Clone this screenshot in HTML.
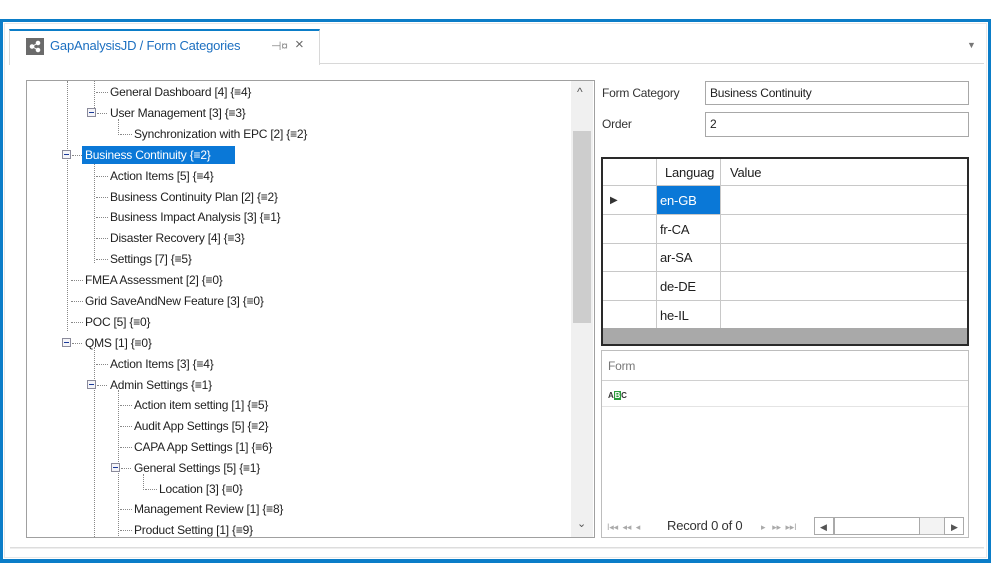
<!DOCTYPE html>
<html><head><meta charset="utf-8"><style>
*{box-sizing:border-box;margin:0;padding:0}
body{width:991px;height:563px;background:#fff;position:relative;overflow:hidden;font-family:"Liberation Sans",sans-serif;font-size:12px;color:#1e1e1e}
.a{position:absolute}
.t{position:absolute;white-space:nowrap;letter-spacing:-0.2px;line-height:14px}
.dv{position:absolute;border-left:1px dotted #888;width:0}
.dh{position:absolute;border-top:1px dotted #888;height:0}
.mn{position:absolute;width:9px;height:9px;border:1px solid #8a8a9a;background:#f4f4f8}
.mn:after{content:"";position:absolute;left:1px;top:3px;width:5px;height:1px;background:#1a3a9a}
</style></head><body>
<!-- blue frame -->
<div class="a" style="left:0;top:19px;width:991px;height:544px;border:3px solid #0b7dc8;border-bottom-width:4px"></div>
<div class="a" style="left:4px;top:23px;width:983px;height:535px;border:1px solid #e8e8e8"></div>
<!-- tab -->
<div class="a" style="left:9px;top:29px;width:311px;height:36px;border:1px solid #d8d8d8;border-top:2px solid #0b7dc8;border-bottom:none;background:#fff"></div>
<div class="a" style="left:320px;top:63px;width:664px;height:1px;background:#d8d8d8"></div>
<div class="a" style="left:26px;top:38px;width:18px;height:17px;background:#6b6b6b"></div>
<svg class="a" style="left:26px;top:38px" width="18" height="17"><g fill="#fff" stroke="#fff"><circle cx="12" cy="5" r="1.8"/><circle cx="6" cy="8.5" r="1.8"/><circle cx="12" cy="12" r="1.8"/><line x1="12" y1="5" x2="6" y2="8.5"/><line x1="6" y1="8.5" x2="12" y2="12"/></g></svg>
<div class="t" style="left:50px;top:39px;color:#1c6fc0;font-size:13px">GapAnalysisJD / Form Categories</div>
<div class="t" style="left:271px;top:39px;color:#888;font-size:12px">⊣¤</div>
<div class="t" style="left:295px;top:38px;color:#666;font-size:15px">×</div>
<div class="t" style="left:967px;top:38px;color:#777;font-size:9px">▼</div>
<!-- tree panel -->
<div class="a" style="left:26px;top:80px;width:569px;height:458px;border:1px solid #a0a0a0;background:#fff;overflow:hidden">
 <div class="a" style="left:544px;top:0;width:22px;height:456px;background:#f0f0f0"></div>
 <div class="a" style="left:546px;top:50px;width:18px;height:192px;background:#cdcdcd"></div>
 <div class="t" style="left:550px;top:4px;color:#555">^</div>
 <div class="t" style="left:550px;top:436px;color:#555;font-size:11px">⌄</div>
</div>
<div class="a" style="left:27px;top:81px;width:543px;height:456px;overflow:hidden">
 <!-- vertical dotted lines (relative to left 27/top 81) -->
 <div class="dv" style="left:40px;top:0;height:250px"></div>
 <div class="dv" style="left:67px;top:0;height:27px"></div>
 <div class="dv" style="left:67px;top:77px;height:105px"></div>
 <div class="dv" style="left:67px;top:266px;height:200px"></div>
 <div class="dv" style="left:91px;top:38px;height:16px"></div>
 <div class="dv" style="left:91px;top:309px;height:160px"></div>
 <div class="dv" style="left:116px;top:393px;height:16px"></div>
</div>
<div id="tree"></div>
<script>
var rows=[
[92,110,"General Dashboard [4] {≡4}",0],
[113,110,"User Management [3] {≡3}",1],
[134,134,"Synchronization with EPC [2] {≡2}",0],
[155,85,"Business Continuity {≡2}",1],
[176,110,"Action Items [5] {≡4}",0],
[197,110,"Business Continuity Plan [2] {≡2}",0],
[217,110,"Business Impact Analysis [3] {≡1}",0],
[238,110,"Disaster Recovery [4] {≡3}",0],
[259,110,"Settings [7] {≡5}",0],
[280,85,"FMEA Assessment [2] {≡0}",0],
[301,85,"Grid SaveAndNew Feature [3] {≡0}",0],
[322,85,"POC [5] {≡0}",0],
[343,85,"QMS [1] {≡0}",1],
[364,110,"Action Items [3] {≡4}",0],
[385,110,"Admin Settings {≡1}",1],
[405,134,"Action item setting [1] {≡5}",0],
[426,134,"Audit App Settings [5] {≡2}",0],
[447,134,"CAPA App Settings [1] {≡6}",0],
[468,134,"General Settings [5] {≡1}",1],
[489,159,"Location [3] {≡0}",0],
[509,134,"Management Review [1] {≡8}",0],
[530,134,"Product Setting [1] {≡9}",0]];
var h="";
rows.forEach(function(r,i){
 var y=r[0],x=r[1];
 if(r[3]){h+='<div class="mn" style="left:'+(x-23)+'px;top:'+(y-5)+'px"></div><div class="dh" style="left:'+(x-13)+'px;top:'+y+'px;width:10px"></div>';}
 else h+='<div class="dh" style="left:'+(x-14)+'px;top:'+y+'px;width:12px"></div>';
 if(i==3)h+='<div class="a" style="left:82px;top:'+(y-9)+'px;width:153px;height:18px;background:#0a78d7"></div><div class="t" style="left:'+x+'px;top:'+(y-7)+'px;color:#fff">'+r[2]+'</div>';
 else h+='<div class="t" style="left:'+x+'px;top:'+(y-7)+'px">'+r[2]+'</div>';
});
var d=document.createElement('div');d.innerHTML=h;d.className='a';d.style.cssText='left:0;top:0;width:570px;height:537px;overflow:hidden';document.body.appendChild(d);
</script>
<!-- right form -->
<div class="t" style="left:602px;top:86px;color:#333">Form Category</div>
<div class="a" style="left:705px;top:81px;width:264px;height:24px;border:1px solid #a8a8a8"></div>
<div class="t" style="left:710px;top:86px">Business Continuity</div>
<div class="t" style="left:602px;top:117px;color:#333">Order</div>
<div class="a" style="left:705px;top:112px;width:264px;height:25px;border:1px solid #a8a8a8"></div>
<div class="t" style="left:710px;top:117px">2</div>
<!-- grid -->
<div class="a" style="left:601px;top:157px;width:368px;height:189px;border:2px solid #2a2a2a;background:#fff;overflow:hidden">
 <div class="a" style="left:0;top:169px;width:366px;height:18px;background:#a9a9a9"></div>
 <div class="a" style="left:53px;top:0;width:1px;height:169px;background:#c8c8c8"></div>
 <div class="a" style="left:117px;top:0;width:1px;height:169px;background:#c8c8c8"></div>
 <div class="a" style="left:0;top:26px;width:366px;height:1px;background:#c8c8c8"></div>
 <div class="a" style="left:0;top:55px;width:366px;height:1px;background:#c8c8c8"></div>
 <div class="a" style="left:0;top:84px;width:366px;height:1px;background:#c8c8c8"></div>
 <div class="a" style="left:0;top:112px;width:366px;height:1px;background:#c8c8c8"></div>
 <div class="a" style="left:0;top:141px;width:366px;height:1px;background:#c8c8c8"></div>
 <div class="a" style="left:54px;top:27px;width:63px;height:28px;background:#0a78d7"></div>
 <div class="t" style="left:62px;top:7px;font-size:13px">Languag</div>
 <div class="t" style="left:127px;top:7px;font-size:13px">Value</div>
 <div class="t" style="left:7px;top:35px;font-size:10px;color:#333">▶</div>
 <div class="t" style="left:57px;top:35px;color:#fff;font-size:13px">en-GB</div>
 <div class="t" style="left:57px;top:64px;font-size:13px">fr-CA</div>
 <div class="t" style="left:57px;top:92px;font-size:13px">ar-SA</div>
 <div class="t" style="left:57px;top:121px;font-size:13px">de-DE</div>
 <div class="t" style="left:57px;top:150px;font-size:13px">he-IL</div>
</div>
<!-- form list -->
<div class="a" style="left:601px;top:350px;width:368px;height:188px;border:1px solid #bdbdbd;background:#fff">
 <div class="a" style="left:0;top:29px;width:366px;height:1px;background:#d0d0d0"></div>
 <div class="a" style="left:0;top:55px;width:366px;height:1px;background:#e4e4e4"></div>
 <div class="t" style="left:6px;top:8px;color:#777">Form</div>
 <div class="t" style="left:6px;top:38px;font-size:8px;font-weight:bold;color:#333">A<span style="background:#2a9a3a;color:#fff;padding:0 1px">B</span>C</div>
 <div class="t" style="left:5px;top:169px;color:#aaa;font-size:9px">I◂◂ &nbsp;◂◂ &nbsp;◂</div>
 <div class="t" style="left:65px;top:168px;font-size:13px;color:#333">Record 0 of 0</div>
 <div class="t" style="left:159px;top:169px;color:#aaa;font-size:9px">▸ &nbsp; ▸▸ &nbsp;▸▸I</div>
 <div class="a" style="left:212px;top:166px;width:150px;height:18px;border:1px solid #bbb;background:#f3f3f3"></div>
 <div class="a" style="left:212px;top:166px;width:20px;height:18px;border:1px solid #aaa;background:#fff"></div>
 <div class="a" style="left:232px;top:166px;width:86px;height:18px;border:1px solid #aaa;background:#fff"></div>
 <div class="a" style="left:342px;top:166px;width:20px;height:18px;border:1px solid #aaa;background:#fff"></div>
 <div class="t" style="left:218px;top:169px;color:#555;font-size:9px">◀</div>
 <div class="t" style="left:349px;top:169px;color:#555;font-size:9px">▶</div>
</div>
<div class="a" style="left:10px;top:547px;width:974px;height:2px;border-top:1px solid #ddd;border-bottom:1px solid #eee"></div>
</body></html>
